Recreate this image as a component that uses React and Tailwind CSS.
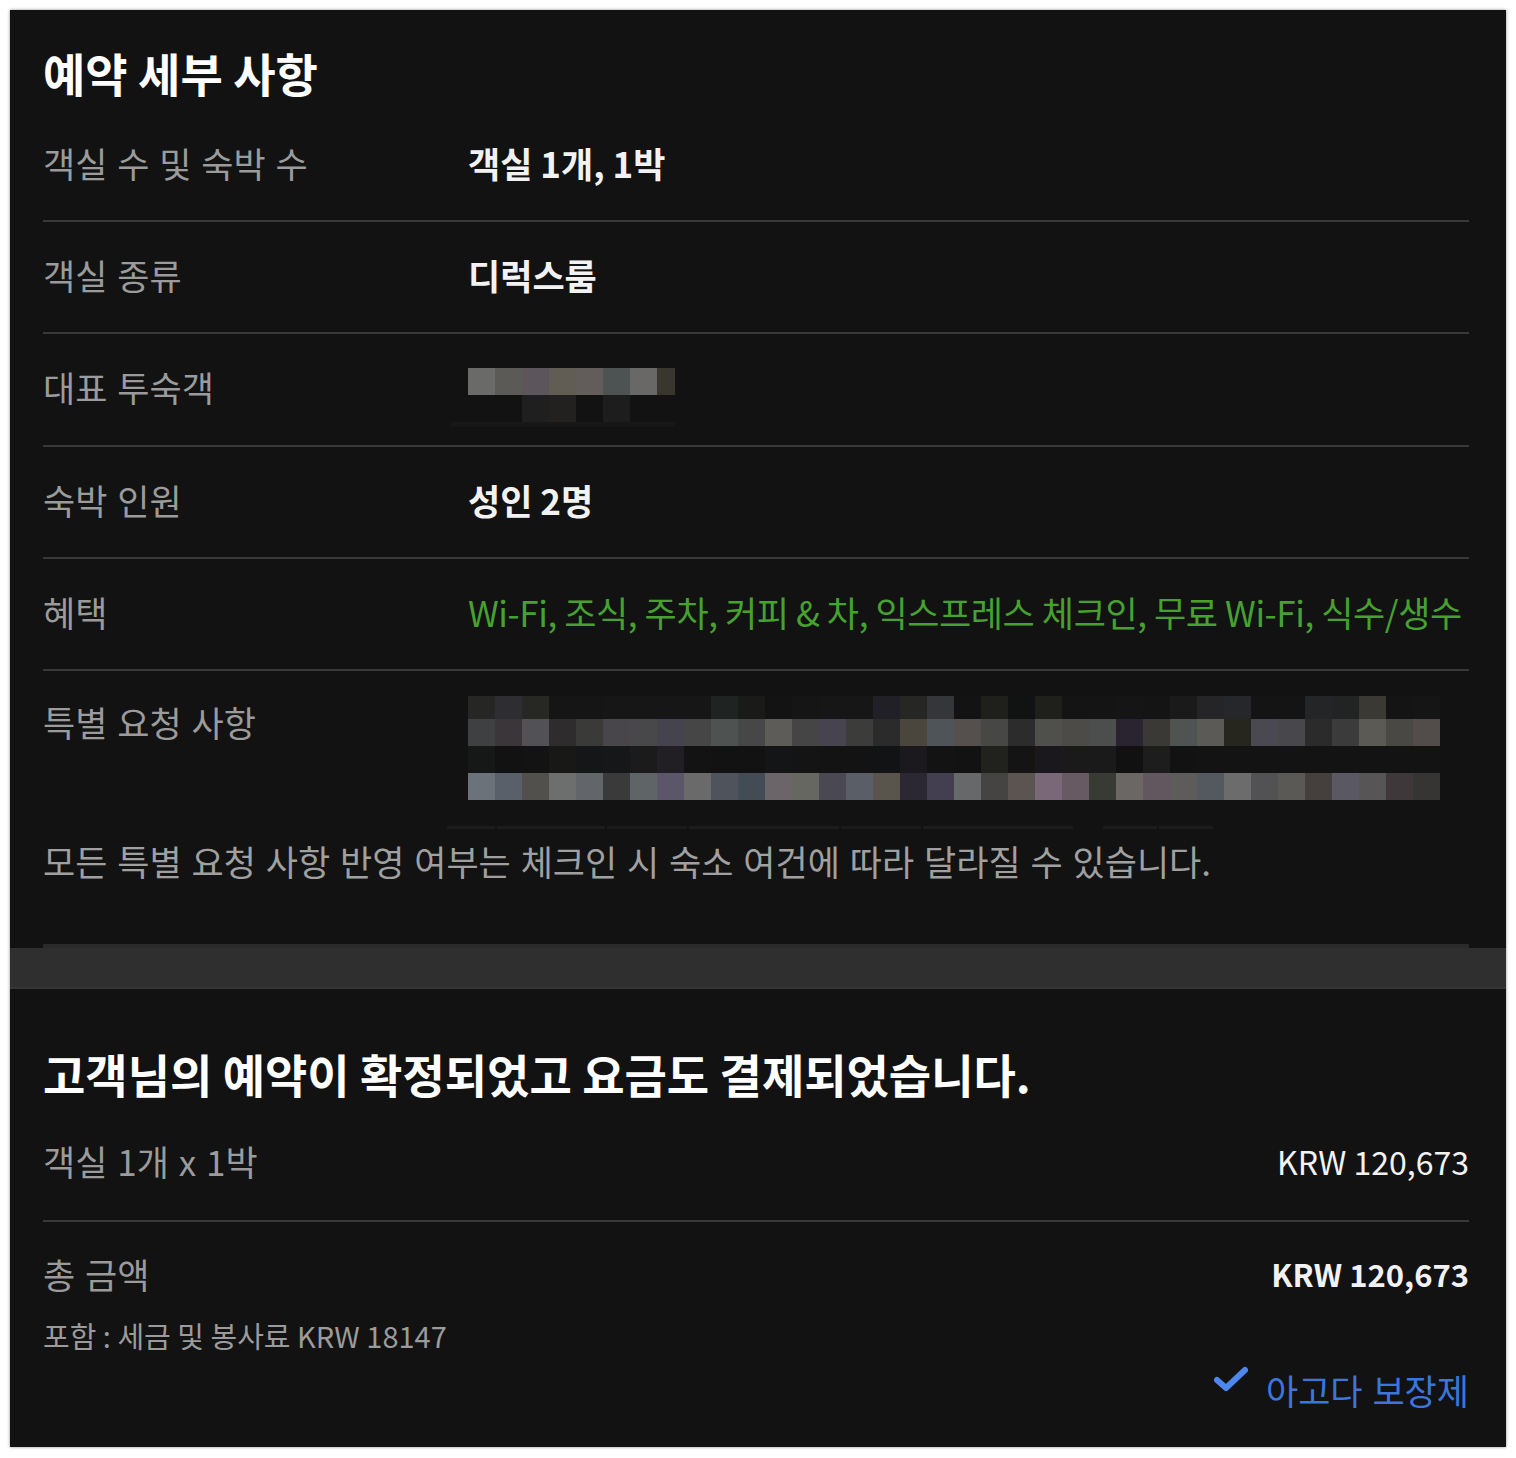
import React from "react";

const FONT = { fontFamily: '"Noto Sans CJK KR", "Noto Sans", sans-serif' };

const guestRow1 = ["#6a6a68", "#5b5a56", "#5c565c", "#615d55", "#625c5b", "#4d5253", "#696866", "#38362f"];
const guestRow2 = ["#121212", "#121212", "#1f1f1f", "#22211f", "#121212", "#1d1d1d", "#121212", "#121212"];

const req1 = ["#262624","#2e2d31","#272724","#151515","#151515","#161616","#161616","#161616","#161616","#1f2322","#1a1a19","#131313","#151515","#161616","#161616","#212027","#262624","#35363a","#131313","#1f1f1c","#111312","#1f1f1b","#141414","#141414","#151515","#141414","#1a1a1a","#252528","#25272a","#141414","#141414","#242527","#222423","#3a3934","#141414","#151515"];
const req2 = ["#3f4042","#3b3639","#525156","#2e2c2d","#3a3a38","#48464a","#48474a","#45434e","#464646","#4e5352","#474747","#5d5c59","#454545","#47444f","#3c3d3a","#2b2b2b","#4a463e","#4f5458","#554f4e","#474745","#2c2c2c","#4f4f4b","#4d4b48","#4b4e4c","#2a2430","#3b3936","#4f5352","#5b5a57","#26261f","#4a4850","#48474b","#2b2b2b","#3b3b3b","#5b5a55","#4a4844","#524d4b"];
const req3 = ["#161817","#121212","#131313","#181816","#141618","#151718","#1b1b1b","#221f24","#131313","#121212","#121212","#141517","#141414","#131313","#131313","#111315","#1b191d","#131313","#121212","#21211e","#141414","#1a181c","#1a1a1a","#1a1a1a","#111111","#1d1d1d","#121212","#131313","#131313","#131313","#131313","#131313","#131313","#131313","#131313","#131313"];
const req4 = ["#6b7279","#59606a","#52504d","#6d6f6e","#62666b","#3a3a3a","#5f6567","#5c566b","#6a6a6a","#4f535c","#434b55","#6b6569","#676762","#4a4852","#5a5e66","#5a554c","#2b2833","#443f50","#676869","#454442","#5c5451","#7a6778","#675a63","#383a34","#6b6765","#62575e","#5e5c5a","#545960","#6c6c6c","#525154","#5b5955","#45403e","#5a5863","#575555","#3f383a","#373533"];

function PixelRow({ colors, h, w = 27 }) {
  return (
    <div className="flex">
      {colors.map((c, i) => (
        <div key={i} style={{ backgroundColor: c, height: h, width: w }} />
      ))}
    </div>
  );
}

function Divider() {
  return <div className="h-[2px] bg-[#383838]" />;
}

function Row({ label, children }) {
  return (
    <div>
      <div className="flex pt-[33px] pb-[37px]">
        <div className="w-[425px] shrink-0 text-[35px] leading-[40px] text-[#9b9b9b] [word-spacing:2px]">{label}</div>
        <div className="flex-1 text-[35px] leading-[40px]">{children}</div>
      </div>
      <Divider />
    </div>
  );
}

export default function App() {
  return (
    <div className="bg-white p-[10px] w-[1516px] h-[1458px]" style={FONT}>
      <div className="bg-[#121212] w-[1496px] h-[1437px] overflow-hidden flex flex-col shadow-[0_0_3px_rgba(0,0,0,0.45)]">
        <div className="pl-[33px] pr-[37px] pt-[37px]">
          <h1 className="text-[46px] leading-[50px] font-bold text-white">예약 세부 사항</h1>
          <div className="mt-[13px]">
            <Row label="객실 수 및 숙박 수">
              <span className="font-bold text-[#f2f2f2]">객실 1개, 1박</span>
            </Row>
            <Row label="객실 종류">
              <span className="font-bold text-[#f2f2f2]">디럭스룸</span>
            </Row>
            <div>
              <div className="flex pt-[33px] pb-[18px]">
                <div className="w-[425px] shrink-0 text-[35px] leading-[40px] text-[#9b9b9b] [word-spacing:2px]">대표 투숙객</div>
                <div className="flex-1">
                  <div className="mt-[1px]">
                    <div className="flex">
                      {guestRow1.map((c, i) => (
                        <div key={i} style={{ backgroundColor: c, height: 27, width: i === 7 ? 18 : 27 }} />
                      ))}
                    </div>
                    <div className="flex">
                      {guestRow2.map((c, i) => (
                        <div key={i} style={{ backgroundColor: c, height: 27, width: i === 7 ? 18 : 27 }} />
                      ))}
                    </div>
                    <div className="ml-[-17px] w-[224px] h-[5px] bg-[#171717]" />
                  </div>
                </div>
              </div>
              <Divider />
            </div>
            <Row label="숙박 인원">
              <span className="font-bold text-[#f2f2f2]">성인 2명</span>
            </Row>
            <Row label="혜택">
              <span className="whitespace-nowrap text-[#46a12f] tracking-[-0.4px]">
                Wi-Fi, 조식, 주차, 커피 &amp; 차, 익스프레스 체크인, 무료 Wi-Fi, 식수/생수
              </span>
            </Row>
            <div className="flex pt-[25px]">
              <div className="w-[425px] shrink-0 pt-[6px] text-[35px] leading-[40px] text-[#9b9b9b] [word-spacing:2px]">특별 요청 사항</div>
              <div className="flex-1">
                <PixelRow colors={req1} h={23} />
                <PixelRow colors={req2} h={27} />
                <PixelRow colors={req3} h={27} />
                <PixelRow colors={req4} h={27} />
                <div className="mt-[26px] ml-[-21px] flex gap-[2px]">
                  <div className="h-[3px] w-[48px] bg-[#1c1c1c]" />
                  <div className="h-[3px] w-[108px] bg-[#1c1c1c]" />
                  <div className="h-[3px] w-[80px] bg-[#1a1a1a]" />
                  <div className="h-[3px] w-[150px] bg-[#1c1c1c]" />
                  <div className="h-[3px] w-[80px] bg-[#1a1a1a]" />
                  <div className="h-[3px] w-[150px] bg-[#1c1c1c]" />
                  <div className="h-[3px] w-[26px] bg-[#121212]" />
                  <div className="h-[3px] w-[54px] bg-[#1c1c1c]" />
                  <div className="h-[3px] w-[54px] bg-[#1c1c1c]" />
                </div>
              </div>
            </div>
            <p className="mt-[12px] text-[35px] leading-[40px] text-[#a0a0a0] whitespace-nowrap [word-spacing:2px]">
              모든 특별 요청 사항 반영 여부는 체크인 시 숙소 여건에 따라 달라질 수 있습니다.
            </p>
            <div className="mt-[63px] h-[4px] bg-[#2a2a2a]" />
          </div>
        </div>
        <div className="h-[41px] bg-[#2f2f2f] border-b-[2px] border-[#363636]" />
        <div className="pl-[33px] pr-[37px] pt-[59px]">
          <h2 className="text-[46px] leading-[50px] font-bold text-white whitespace-nowrap">
            고객님의 예약이 확정되었고 요금도 결제되었습니다.
          </h2>
          <div className="flex justify-between items-center mt-[43px] pb-[39px] leading-[40px]">
            <span className="text-[35px] text-[#9b9b9b] [word-spacing:2px]">객실 1개 x 1박</span>
            <span className="text-[32px] text-[#f2f2f2]">KRW 120,673</span>
          </div>
          <Divider />
          <div className="flex justify-between items-center pt-[32px] leading-[40px]">
            <span className="text-[35px] text-[#9b9b9b] [word-spacing:2px]">총 금액</span>
            <span className="text-[31px] font-bold text-[#f2f2f2]">KRW 120,673</span>
          </div>
          <div className="mt-[25px] text-[29px] leading-[32px] text-[#9b9b9b]">포함 : 세금 및 봉사료 KRW 18147</div>
          <div className="mt-[19px] flex justify-end items-center gap-[18px]">
            <svg width="34" height="28" viewBox="0 0 34 28" className="mt-[-20px]">
              <path d="M3 14 L12 22 L31 4" fill="none" stroke="#4d86ec" strokeWidth="6" strokeLinecap="round" strokeLinejoin="round" />
            </svg>
            <span className="text-[35px] leading-[40px] text-[#3b76dc] [word-spacing:2px]">아고다 보장제</span>
          </div>
        </div>
      </div>
    </div>
  );
}
